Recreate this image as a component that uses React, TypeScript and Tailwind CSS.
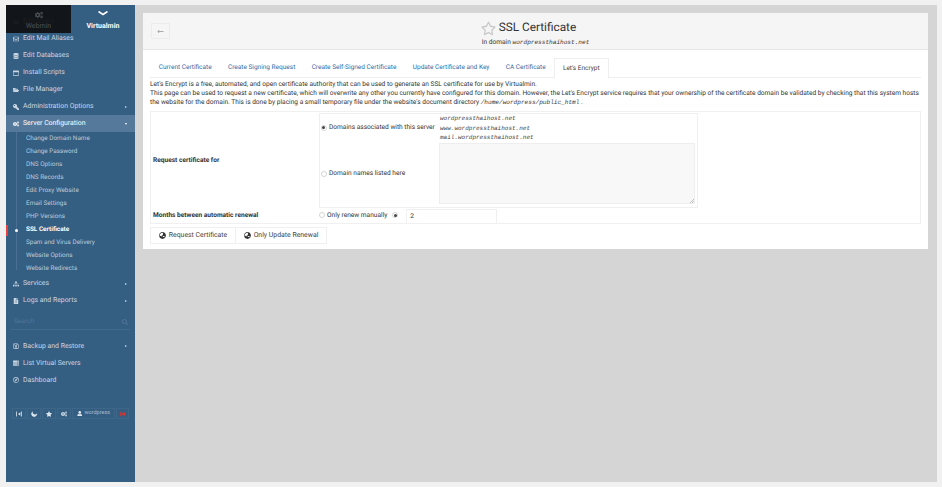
import type { ReactNode } from 'react';
import {
  FaRegEnvelope,
  FaDatabase,
  FaRegWindowMaximize,
  FaFolderOpen,
  FaKey,
  FaCogs,
  FaSitemap,
  FaFileAlt,
  FaRegSave,
  FaServer,
  FaRegCompass,
  FaUserFriends,
  FaStar,
  FaRegStar,
  FaMoon,
  FaUser,
  FaSignOutAlt,
  FaSearch,
  FaLongArrowAltLeft,
  FaGlobeAsia,
} from 'react-icons/fa';

const SUB_ITEMS = [
  'Change Domain Name',
  'Change Password',
  'DNS Options',
  'DNS Records',
  'Edit Proxy Website',
  'Email Settings',
  'PHP Versions',
  'SSL Certificate',
  'Spam and Virus Delivery',
  'Website Options',
  'Website Redirects',
];

const TABS = [
  'Current Certificate',
  'Create Signing Request',
  'Create Self-Signed Certificate',
  'Update Certificate and Key',
  'CA Certificate',
];

function MenuRow({ icon, label, arrow, active }: { icon: ReactNode; label: string; arrow?: 'left' | 'down'; active?: boolean }) {
  return (
    <div className={`h-[17px] flex items-center pl-[5px] pr-[8px] text-[6.9px] text-[#c9d6e2] ${active ? 'bg-[#55799b] text-white' : ''}`}>
      <span className="w-[10px] flex justify-center text-[6px] shrink-0">{icon}</span>
      <span className="ml-[2px] flex-1 whitespace-nowrap">{label}</span>
      {arrow === 'left' && <span className="w-0 h-0 border-y-[1.5px] border-y-transparent border-l-[2px] border-l-[#d3dee8]" />}
      {arrow === 'down' && <span className="w-0 h-0 border-x-[1.5px] border-x-transparent border-t-[2px] border-t-white" />}
    </div>
  );
}

function SubMenu() {
  return (
    <div className="relative pt-[0.5px] mb-[-0.5px]">
      <div className="absolute left-[10px] top-0 bottom-[6px] w-px bg-[#4a7195]" />
      {SUB_ITEMS.map((item) => {
        const current = item === 'SSL Certificate';
        return (
          <div key={item} className={`relative h-[13px] flex items-center pl-[20px] text-[6.4px] whitespace-nowrap ${current ? 'font-bold text-white' : 'text-[#bccbd9]'}`}>
            {current && (
              <>
                <span className="absolute left-0 top-[1px] w-[2px] h-[11px] bg-[#e8403a]" />
                <span className="absolute left-[9px] top-[5px] w-[3px] h-[3px] rounded-full bg-white" />
              </>
            )}
            {item}
          </div>
        );
      })}
    </div>
  );
}

function Sidebar() {
  return (
    <aside className="relative w-[129px] shrink-0 bg-[#355e83] pt-[8px] overflow-hidden">
      <MenuRow icon={<FaUserFriends />} label="Edit Users" />
      <MenuRow icon={<FaRegEnvelope />} label="Edit Mail Aliases" />
      <MenuRow icon={<FaDatabase />} label="Edit Databases" />
      <MenuRow icon={<FaRegWindowMaximize />} label="Install Scripts" />
      <MenuRow icon={<FaFolderOpen />} label="File Manager" />
      <MenuRow icon={<FaKey className="-scale-x-100" />} label="Administration Options" arrow="left" />
      <MenuRow icon={<FaCogs />} label="Server Configuration" arrow="down" active />
      <SubMenu />
      <MenuRow icon={<FaSitemap />} label="Services" arrow="left" />
      <MenuRow icon={<FaFileAlt />} label="Logs and Reports" arrow="left" />

      <div className="mt-[6px] mx-[5px] h-[15px] flex items-center justify-between pl-[3px] pr-[2px] border-b border-[#3f6a90] text-[6.5px] text-[#4f7699]">
        <span>Search</span>
        <FaSearch className="text-[6px]" />
      </div>

      <div className="mt-[7.5px]">
        <MenuRow icon={<FaRegSave />} label="Backup and Restore" arrow="left" />
        <MenuRow icon={<FaServer />} label="List Virtual Servers" />
        <MenuRow icon={<FaRegCompass />} label="Dashboard" />
      </div>

      <div className="mt-[19.5px] mx-[6px] h-[11px] flex items-stretch gap-px text-[6px] text-[#dbe5ee]">
        <span className="w-[14px] border border-[#3d6688] flex items-center justify-center">
          <svg width="6" height="6" viewBox="0 0 6 6"><path d="M0.5 0.5V5.5M5.5 0.5V5.5" stroke="#dbe5ee" strokeWidth="0.8" /><path d="M4.4 1.2V4.8L2 3Z" fill="#dbe5ee" /></svg>
        </span>
        <span className="w-[14px] border border-[#3d6688] flex items-center justify-center"><FaMoon className="-rotate-45" /></span>
        <span className="w-[14px] border border-[#3d6688] flex items-center justify-center"><FaStar /></span>
        <span className="w-[14px] border border-[#3d6688] flex items-center justify-center"><FaCogs /></span>
        <span className="flex-1 border border-[#3d6688] flex items-center justify-center gap-[2px] text-[5.5px] text-[#a9bdcf]"><FaUser className="text-[#dbe5ee]" />wordpress</span>
        <span className="w-[13px] border border-[#3d6688] flex items-center justify-center text-[#d9342e]"><FaSignOutAlt /></span>
      </div>

      {/* Webmin / Virtualmin switcher sits on top of the scrolled menu */}
      <div className="absolute left-0 top-0 w-full h-[28px] flex text-[7px]">
        <div className="w-[65px] bg-[#111214]/95 flex flex-col items-center justify-end pb-[2px] text-[#4d5156]">
          <FaCogs className="text-[8px] mb-[2px]" />
          Webmin
        </div>
        <div className="flex-1 flex flex-col items-center justify-end pb-[2px] font-bold text-white">
          <svg width="10" height="5" viewBox="0 0 10 5" className="mb-[5px]"><path d="M0.5 0.5 5 3.5 9.5 0.5" fill="none" stroke="white" strokeWidth="1.6" /></svg>
          Virtualmin
        </div>
      </div>
    </aside>
  );
}

function Radio({ on }: { on?: boolean }) {
  return (
    <span className="w-[6px] h-[6px] rounded-full border border-[#d5d5d5] flex items-center justify-center shrink-0 bg-white">
      {on && <span className="w-[3px] h-[3px] rounded-full bg-[#444]" />}
    </span>
  );
}

function RequestForm() {
  return (
    <div className="mt-[4px] border border-[#f0f0f0] h-[113px] flex">
      <div className="w-[168px] shrink-0 flex flex-col pl-[2px] font-bold text-[#333]">
        <div className="h-[96px] flex items-center pt-[1px]">Request certificate for</div>
        <div className="flex-1 flex items-center">Months between automatic renewal</div>
      </div>
      <div className="flex-1 pt-[1px]">
        <div className="w-[379px] h-[95px] border border-[#f0f0f0] flex">
          <div className="w-[119px] shrink-0 flex flex-col pl-[0.5px]">
            <div className="h-[29px] flex items-center gap-[2.5px] pb-[2px] whitespace-nowrap"><Radio on />Domains associated with this server</div>
            <div className="flex-1 flex items-center gap-[2.5px] pb-[3px] whitespace-nowrap"><Radio />Domain names listed here</div>
          </div>
          <div className="flex-1 flex flex-col">
            <div className="h-[29px] pl-[1px] font-['Liberation_Mono',monospace] text-[6px] leading-[9.4px] italic text-[#444]">
              <div>wordpressthaihost.net</div>
              <div>www.wordpressthaihost.net</div>
              <div>mail.wordpressthaihost.net</div>
            </div>
            <div className="relative flex-1 mr-[2px] mb-[3px] bg-[#f8f8f8] border border-[#eeeeee]">
              <svg width="5" height="5" viewBox="0 0 5 5" className="absolute right-0 bottom-0"><path d="M1 5 5 1M3 5 5 3" stroke="#999" strokeWidth="0.6" /></svg>
            </div>
          </div>
        </div>
        <div className="flex items-center h-[16px] whitespace-nowrap">
          <span className="flex items-center pb-[2px]">
            <Radio />
            <span className="ml-[2px]">Only renew manually</span>
            <span className="ml-[5px]"><Radio on /></span>
          </span>
          <span className="ml-[8px] w-[91px] h-[15px] border border-[#f0f0f0] flex items-center pl-[3px]">2</span>
        </div>
      </div>
    </div>
  );
}

function Main() {
  return (
    <main className="flex-1 min-w-0 pl-[8px] pr-[9px] pt-[8px]">
      <section className="h-[236px] bg-white overflow-hidden">
        <header className="relative h-[37px] bg-[#f5f5f5] border-b border-[#e7e7e7] flex flex-col items-center text-[#333]">
          <span className="absolute left-[8px] top-[10px] w-[19px] h-[16px] border border-[#ececec] flex items-center justify-center text-[7px] text-[#aaa]">
            <FaLongArrowAltLeft />
          </span>
          <div className="mt-[7px] h-[16px] flex items-center gap-[3px] pr-[14px]">
            <FaRegStar className="text-[15px] text-[#c8c8c8]" />
            <span className="text-[11.8px] leading-none">SSL Certificate</span>
          </div>
          <div className="mt-[2px] text-[6.6px] leading-[8px] whitespace-nowrap">
            In domain <span className="font-['Liberation_Mono',monospace] italic text-[6.1px]">wordpressthaihost.net</span>
          </div>
        </header>

        <div className="px-[7px] text-[6.58px] leading-[8.8px] text-[#333]">
          <nav className="mt-[8px] h-[20px] flex pl-[0.6px] border-b border-[#eeeeee] text-[6.5px]">
            {TABS.map((tab) => (
              <span key={tab} className="px-[8.2px] flex items-center whitespace-nowrap text-[#2f6da8]">{tab}</span>
            ))}
            <span className="px-[8px] h-[20px] flex items-center whitespace-nowrap bg-white text-[#444] border border-b-0 border-[#eeeeee]">Let's Encrypt</span>
          </nav>

          <div className="mt-[2px] whitespace-nowrap">
            <div>Let's Encrypt is a free, automated, and open certificate authority that can be used to generate an SSL certificate for use by Virtualmin.</div>
            <div>This page can be used to request a new certificate, which will overwrite any other you currently have configured for this domain. However, the Let's Encrypt service requires that your ownership of the certificate domain be validated by checking that this system hosts</div>
            <div>
              the website for the domain. This is done by placing a small temporary file under the website's document directory{' '}
              <span className="font-['Liberation_Mono',monospace] italic text-[6.1px]">/home/wordpress/public_html</span> .
            </div>
          </div>

          <RequestForm />

          <div className="mt-[3px] w-[177px] h-[17px] border border-[#f0f0f0] flex text-[6.9px] text-[#444]">
            <span className="w-[85px] border-r border-[#f0f0f0] flex items-center justify-center gap-[3px] whitespace-nowrap"><FaGlobeAsia className="text-[7px] text-[#333]" />Request Certificate</span>
            <span className="flex-1 flex items-center justify-center gap-[3px] whitespace-nowrap"><FaGlobeAsia className="text-[7px] text-[#333]" />Only Update Renewal</span>
          </div>
        </div>
      </section>
    </main>
  );
}

export default function App() {
  return (
    <div className="w-[942px] h-[487px] bg-[#f1f1f1] pl-[6px] pr-[5px] pt-[5px] pb-[5px] font-['Roboto',sans-serif] [text-rendering:geometricPrecision] overflow-hidden">
      <div className="h-full flex bg-[#d5d5d5]">
        <Sidebar />
        <Main />
      </div>
    </div>
  );
}
